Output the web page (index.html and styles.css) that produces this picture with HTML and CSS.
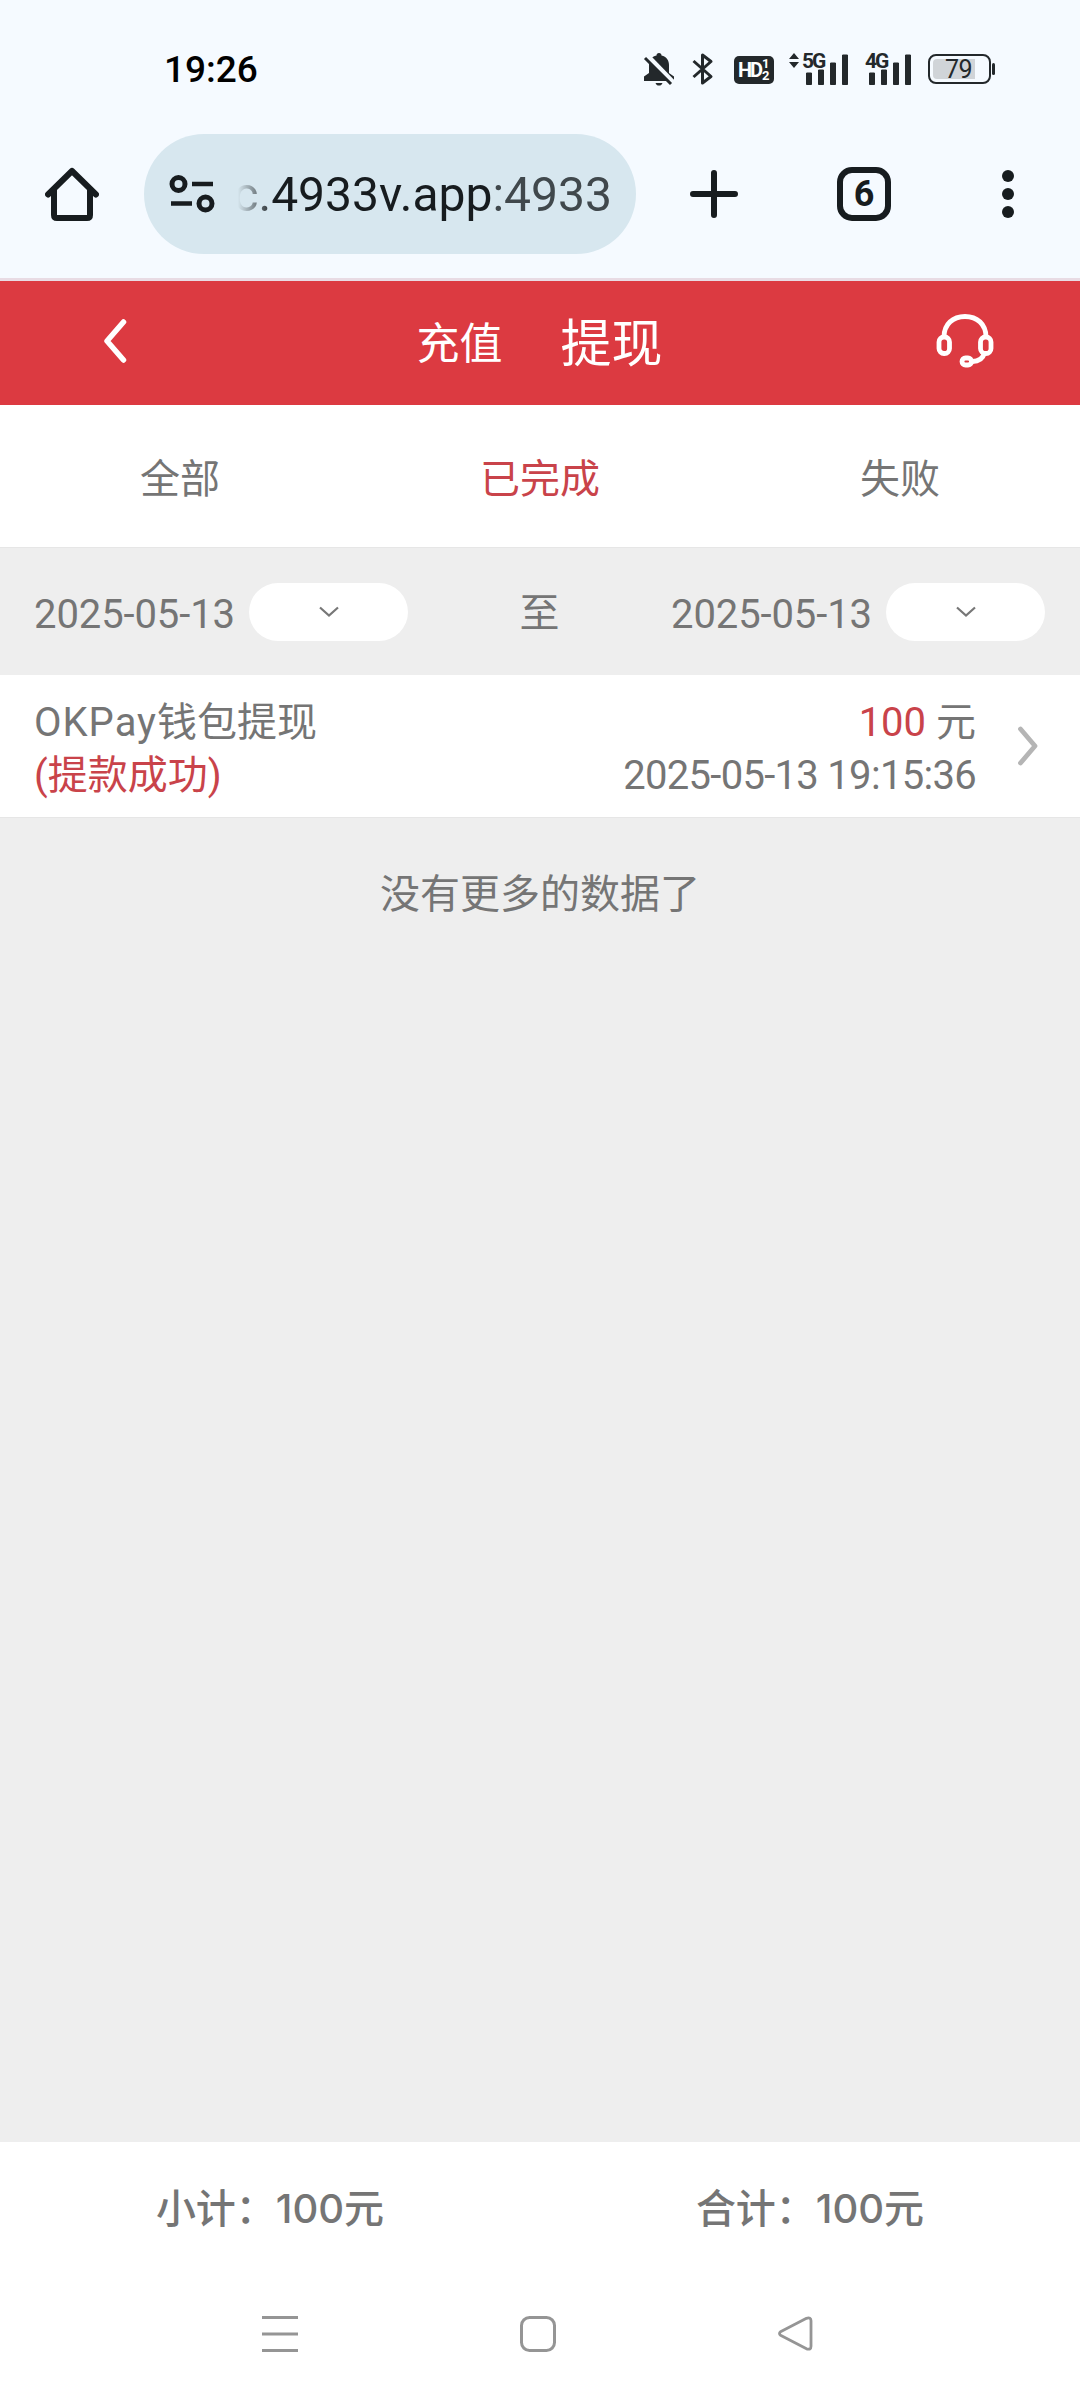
FILE: index.html
```html
<!DOCTYPE html>
<html lang="zh-CN">
<head>
  <meta charset="UTF-8" />
  <meta name="viewport" content="width=device-width, initial-scale=1.0" />
  <title>提现记录</title>
  <link rel="stylesheet" href="styles.css">
</head>
<body>
  <!-- Status bar -->
  <div class="status-bar">
    <span class="clock">19:26</span>
    <div class="status-icons">
      <svg class="icon-bell" width="32" height="34" viewBox="0 0 32 34">
        <path d="M16 1c1.600 0 2.500 1 2.500 2.500C23.500 4.700 26 8.500 26 13v8l5 3.500V29H1v-4.500L6 21v-8c0-4.500 2.500-8.300 7.500-9.500C13.500 2 14.400 1 16 1zM12.500 31h7c-.5 1.700-1.800 2.600-3.500 2.600s-3-.9-3.500-2.600z" fill="#23282b"/>
        <path d="M3 3l27 28" stroke="#f5faff" stroke-width="6"/>
        <path d="M2 6l26 26" stroke="#23282b" stroke-width="3"/>
      </svg>
      <svg class="icon-bt" width="22" height="34" viewBox="0 0 22 34">
        <path d="M1.500 9L19 24.500 10.500 31V3L19 9.500 1.500 25" fill="none" stroke="#23282b" stroke-width="3" stroke-linejoin="round"/>
      </svg>
      <div class="hd"><span class="hd-label">HD</span><span class="hd-sim"><i>1</i><i>2</i></span></div>
      <div class="signal signal-5g">
        <svg width="60" height="34" viewBox="0 0 60 34" fill="#23282b">
          <path d="M0 7l5-6 5 6zM0 10h10l-5 6z"/>
          <path d="M17.500 21h5v11.500h-5zM29.500 18h5v14.500h-5zM41.500 11h5v21.500h-5zM53.500 3h5v29.500h-5z" stroke="#23282b" stroke-width="1" stroke-linejoin="round"/>
        </svg>
        <span class="net">5G</span>
      </div>
      <div class="signal signal-4g">
        <svg width="47" height="34" viewBox="0 0 47 34" fill="#23282b">
          <path d="M4.500 21h5v11.500h-5zM16.500 18h5v14.500h-5zM28.500 11h5v21.500h-5zM40.500 3h5v29.500h-5z" stroke="#23282b" stroke-width="1" stroke-linejoin="round"/>
        </svg>
        <span class="net">4G</span>
      </div>
      <div class="battery"><span>79</span></div>
      <div class="battery-tip"></div>
    </div>
  </div>

  <!-- Browser toolbar -->
  <div class="toolbar">
    <svg class="icon-home" width="54" height="54" viewBox="0 0 54 54" fill="none" stroke="#171c1f" stroke-width="6" stroke-linejoin="round" stroke-linecap="round">
      <path d="M3 27.500L27 4l24 23.500"/>
      <path d="M9 23v25q0 3 3 3h30q3 0 3-3V23"/>
    </svg>
    <div class="url-box">
      <svg width="46" height="40" viewBox="0 0 46 40" fill="none" stroke="#171c1f">
        <circle cx="9.500" cy="10" r="6.500" stroke-width="5"/>
        <circle cx="36.500" cy="29.500" r="6.500" stroke-width="5"/>
        <path d="M23 10h21M2 29.500h21" stroke-width="4.500"/>
      </svg>
      <div class="url"><span>c.4933v.app<em>:4933</em></span></div>
    </div>
    <svg class="icon-plus" width="48" height="48" viewBox="0 0 48 48" stroke="#171c1f" stroke-width="6" stroke-linecap="round">
      <path d="M3 24h42M24 3v42"/>
    </svg>
    <div class="tab-count">6</div>
    <svg class="icon-more" width="12" height="48" viewBox="0 0 12 48" fill="#171c1f">
      <circle cx="6" cy="6" r="6"/><circle cx="6" cy="24" r="6"/><circle cx="6" cy="42" r="6"/>
    </svg>
  </div>

  <!-- Page header -->
  <div class="header">
    <svg class="icon-back" width="24" height="44" viewBox="0 0 24 44" fill="none" stroke="#fff" stroke-width="5.500" stroke-linecap="round" stroke-linejoin="round">
      <path d="M20.500 3L4 22l16.500 19"/>
    </svg>
    <div class="titles">
      <span class="title">充值</span>
      <span class="title active">提现</span>
    </div>
    <svg class="icon-service" width="58" height="54" viewBox="0 0 58 54" fill="none" stroke="#fff" stroke-width="4.800">
      <path d="M8 23C8 10 17 2.500 29 2.500S50 10 50 23"/>
      <rect x="3" y="23" width="10.500" height="16.500" rx="5"/>
      <rect x="44.500" y="23" width="10.500" height="16.500" rx="5"/>
      <path d="M48.500 39c-1.500 5-5 8.500-12 8.500"/>
      <rect x="26" y="44" width="9.500" height="7" rx="3.500"/>
    </svg>
  </div>

  <!-- Status tabs -->
  <div class="tabs">
    <div class="tab">全部</div>
    <div class="tab active">已完成</div>
    <div class="tab">失败</div>
  </div>

  <!-- Date filter -->
  <div class="filter">
    <div class="date">
      <span class="day">2025-05-13</span>
      <div class="picker"><svg width="20" height="12" viewBox="0 0 20 12" fill="none" stroke="#777" stroke-width="2.200"><path d="M1 1.500l9 8 9-8"/></svg></div>
    </div>
    <span class="to">至</span>
    <div class="date">
      <span class="day">2025-05-13</span>
      <div class="picker"><svg width="20" height="12" viewBox="0 0 20 12" fill="none" stroke="#777" stroke-width="2.200"><path d="M1 1.500l9 8 9-8"/></svg></div>
    </div>
  </div>

  <!-- Records -->
  <div class="list">
    <div class="record">
      <div class="record-left">
        <div><span class="okpay">OKPay</span>钱包提现</div>
        <div class="red">(提款成功)</div>
      </div>
      <div class="record-right">
        <div><span class="red amount">100</span> 元</div>
        <div class="time">2025-05-13 19:15:36</div>
      </div>
      <svg class="icon-arrow" width="22" height="40" viewBox="0 0 22 40" fill="none" stroke="#b5b5b5" stroke-width="4.800" stroke-linecap="round" stroke-linejoin="round">
        <path d="M3.500 3L18 20 3.500 37"/>
      </svg>
    </div>
    <p class="no-more">没有更多的数据了</p>
  </div>

  <!-- Totals -->
  <div class="totals">
    <div class="total">小计：100元</div>
    <div class="total">合计：100元</div>
  </div>

  <!-- System navigation -->
  <div class="nav-bar">
    <svg width="36" height="36" viewBox="0 0 36 36" stroke="#959595" stroke-width="3"><path d="M0 1.500h36M0 18h36M0 34.500h36"/></svg>
    <svg width="36" height="36" viewBox="0 0 36 36" fill="none" stroke="#959595" stroke-width="3"><rect x="1.500" y="1.500" width="33" height="33" rx="8"/></svg>
    <svg width="36" height="36" viewBox="0 0 36 36" fill="none" stroke="#959595" stroke-width="2.800" stroke-linejoin="round"><path d="M2.500 15.800L28.500 2.300q4.500-1.500 4.500 2.500v25.500q0 4-4.500 2.500L2.500 19.300q-2-1.700 0-3.500z"/></svg>
  </div>
</body>
</html>
```

FILE: styles.css
```css
/* Reset */
* {
  margin: 0;
  padding: 0;
  box-sizing: border-box;
}
body {
  width: 1080px;
  height: 2400px;
  display: flex;
  flex-direction: column;
  overflow: hidden;
  background: #eee;
  color: #757575;
  font-family: Roboto, "Noto Sans CJK SC", sans-serif;
  font-size: 40px;
}
svg {
  display: block;
  flex-shrink: 0;
}
.red { color: #c9434a; }

/* Status bar */
.status-bar {
  height: 134px;
  padding: 51px 85px 0 164px;
  display: flex;
  justify-content: space-between;
  align-items: flex-start;
  background: #f5faff;
}
.clock {
  font-size: 37px;
  line-height: 38px;
  font-weight: 500;
  color: #000;
}
.status-icons {
  display: flex;
  align-items: center;
  height: 34px;
  margin-top: 1px;
}
.icon-bell { margin-right: 17px; }
.icon-bt { margin-right: 20px; }
.hd {
  width: 40px;
  height: 28px;
  margin: 2px 15px 0 0;
  padding-left: 4px;
  display: flex;
  align-items: center;
  border-radius: 5px;
  background: #23282b;
  color: #fff;
  font-weight: 700;
}
.hd-label {
  width: 24px;
  font-size: 20px;
  line-height: 28px;
  letter-spacing: -2px;
}
.hd-sim {
  display: flex;
  flex-direction: column;
  font-size: 13px;
  line-height: 12px;
}
.hd-sim i { font-style: normal; }
.signal {
  position: relative;
  height: 34px;
}
.signal-5g { margin-right: 16px; }
.signal-4g { margin-right: 16px; }
.net {
  position: absolute;
  top: -1px;
  left: 0;
  font-size: 21px;
  line-height: 20px;
  font-weight: 700;
  letter-spacing: -2px;
  color: #23282b;
}
.signal-5g .net { left: 13px; }
.battery {
  width: 63px;
  height: 30px;
  padding: 3px;
  border: 2px solid #23282b;
  border-radius: 8px;
}
.battery span {
  display: block;
  width: 42px;
  height: 20px;
  padding-left: 12px;
  border-radius: 4px 0 0 4px;
  background: #d0d4d8;
  color: #23282b;
  font-size: 25px;
  line-height: 21px;
  letter-spacing: -0.5px;
}
.battery-tip {
  width: 3px;
  height: 12px;
  margin-left: 1px;
  border-radius: 2px;
  background: #23282b;
}

/* Browser toolbar */
.toolbar {
  height: 147px;
  padding: 0 66px 24px 45px;
  display: flex;
  align-items: center;
  background: #f5faff;
  border-bottom: 3px solid #e8dbe4;
}
.url-box {
  width: 492px;
  height: 120px;
  margin: 0 54px 0 45px;
  padding-left: 25px;
  display: flex;
  align-items: center;
  border-radius: 60px;
  background: #d7e7ef;
}
.url {
  width: 374px;
  margin-left: 23px;
  display: flex;
  justify-content: flex-end;
  overflow: hidden;
  white-space: nowrap;
  font-size: 48px;
  color: #171c1f;
  -webkit-mask-image: linear-gradient(90deg, transparent, #000 36px);
  mask-image: linear-gradient(90deg, transparent, #000 36px);
}
.url em {
  font-style: normal;
  color: #40484c;
}
.tab-count {
  width: 54px;
  height: 54px;
  margin: 0 111px 0 99px;
  border: 6px solid #171c1f;
  border-radius: 15px;
  color: #171c1f;
  font-size: 36px;
  line-height: 42px;
  font-weight: 700;
  text-align: center;
}

/* Page header */
.header {
  height: 124px;
  padding: 0 86px 5px 103px;
  display: flex;
  align-items: center;
  justify-content: space-between;
  background: #dc3a41;
  color: #fff;
}
.titles {
  display: flex;
  align-items: center;
  gap: 58px;
  margin-left: 16px;
  padding-bottom: 2px;
}
.title { font-size: 43px; }
.title.active { font-size: 51px; }

/* Status tabs */
.tabs {
  height: 143px;
  display: flex;
  align-items: center;
  background: #fff;
  border-bottom: 1px solid #e6e6e6;
}
.tab {
  width: 360px;
  text-align: center;
}
.tab.active { color: #c9434a; }

/* Date filter */
.filter {
  height: 127px;
  padding: 0 35px 0 34px;
  display: flex;
  align-items: center;
  justify-content: space-between;
}
.date {
  display: flex;
  align-items: center;
}
.day {
  width: 215px;
  padding-top: 5px;
  letter-spacing: -0.1px;
}
.to { padding-bottom: 4px; }
.picker {
  width: 159px;
  height: 58px;
  display: flex;
  align-items: center;
  justify-content: center;
  border-radius: 29px;
  background: #fff;
}

/* Records */
.list { flex: 1; }
.record {
  height: 143px;
  padding: 0 41px 0 34px;
  display: flex;
  align-items: center;
  background: #fff;
  border-bottom: 1px solid #e6e6e6;
  line-height: 53px;
}
.record-left,
.record-right { padding-top: 6px; }
.record-right {
  margin-left: auto;
  margin-right: 41px;
  text-align: right;
}
.okpay { letter-spacing: 1px; }
.time { letter-spacing: -0.7px; }
.no-more {
  height: 154px;
  line-height: 154px;
  text-align: center;
}

/* Totals */
.totals {
  height: 132px;
  padding-bottom: 4px;
  display: flex;
  align-items: center;
  background: #fff;
  font-family: Inter, "Noto Sans CJK SC", sans-serif;
  font-weight: 500;
}
.total {
  width: 540px;
  text-align: center;
}

/* System navigation */
.nav-bar {
  height: 126px;
  padding: 42px 266px 0 262px;
  display: flex;
  justify-content: space-between;
  background: #fff;
}
```
